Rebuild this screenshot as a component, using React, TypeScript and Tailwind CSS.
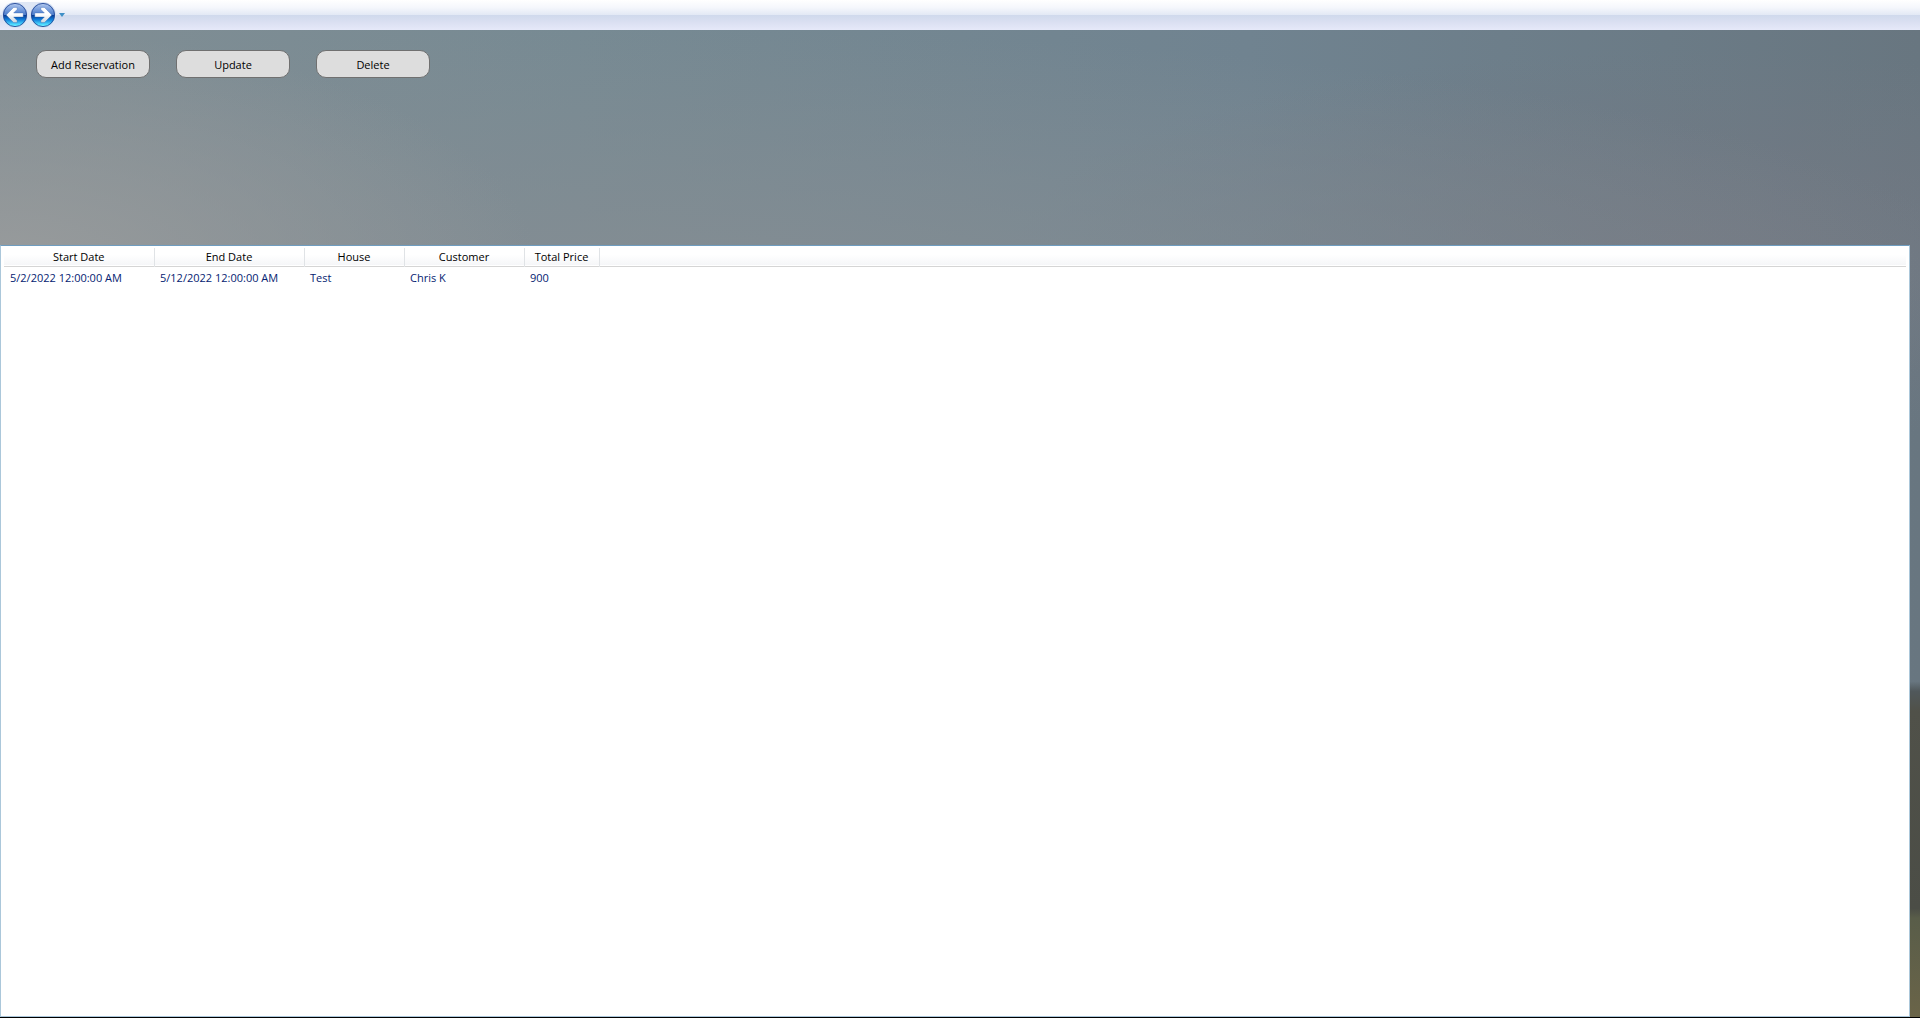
import React, { useState } from 'react';

interface Reservation {
  startDate: string;
  endDate: string;
  house: string;
  customer: string;
  totalPrice: number;
}

const RESERVATIONS: Reservation[] = [
  {
    startDate: '5/2/2022 12:00:00 AM',
    endDate: '5/12/2022 12:00:00 AM',
    house: 'Test',
    customer: 'Chris K',
    totalPrice: 900,
  },
];

const COLUMNS = [
  { label: 'Start Date', width: 'w-[150px]' },
  { label: 'End Date', width: 'w-[150px]' },
  { label: 'House', width: 'w-[100px]' },
  { label: 'Customer', width: 'w-[120px]' },
  { label: 'Total Price', width: 'w-[75px]' },
];

const ACTIONS = ['Add Reservation', 'Update', 'Delete'];

const ArrowIcon: React.FC<{ direction: 'back' | 'forward' }> = ({ direction }) => (
  <svg viewBox="0 0 26 26" className="block size-[26px]" aria-hidden="true">
    <defs>
      <linearGradient id={`${direction}-top`} x1="0" y1="0" x2="0" y2="1">
        <stop offset="0" stopColor="#b4caee" />
        <stop offset="0.5" stopColor="#7ba0de" />
        <stop offset="1" stopColor="#4a7bca" />
      </linearGradient>
      <linearGradient id={`${direction}-bottom`} x1="0" y1="0" x2="0" y2="1">
        <stop offset="0" stopColor="#07388f" />
        <stop offset="0.4" stopColor="#1080dc" />
        <stop offset="0.8" stopColor="#4fdcff" />
        <stop offset="1" stopColor="#7ff8ff" />
      </linearGradient>
      <linearGradient id={`${direction}-arrow`} x1="0" y1="0" x2="0" y2="1">
        <stop offset="0.45" stopColor="#ffffff" />
        <stop offset="1" stopColor="#ccd5dc" />
      </linearGradient>
    </defs>
    <circle cx="13" cy="13" r="12.8" fill="#d3dff2" />
    <path d="M1.2 13a11.8 11.8 0 0 1 23.6 0z" fill={`url(#${direction}-top)`} />
    <path d="M1.2 13a11.8 11.8 0 0 0 23.6 0z" fill={`url(#${direction}-bottom)`} />
    <circle cx="13" cy="13" r="11.6" fill="none" stroke="#254a98" strokeWidth="0.9" />
    <path
      d="M4.2 13l7.3-7.6h3.6v2L11.6 11h9.6v4h-9.6l3.5 3.6v2h-3.6z"
      transform={direction === 'forward' ? 'matrix(-1 0 0 1 26 0)' : undefined}
      fill={`url(#${direction}-arrow)`}
      stroke="#2558a8"
      strokeOpacity="0.5"
      strokeWidth="0.6"
    />
  </svg>
);

const NavigationBar: React.FC = () => (
  <nav className="h-[30px] shrink-0 flex items-center pl-0.5 bg-[linear-gradient(to_bottom,#ffffff_0%,#f5f7fc_25%,#e3e9f5_49%,#cfd9ec_50%,#dbe0f2_75%,#e6e9f9_100%)]">
    <div className="flex gap-0.5 rounded-full bg-[#dfe7f5]">
      <button aria-label="Back" className="rounded-full">
        <ArrowIcon direction="back" />
      </button>
      <button aria-label="Forward" className="rounded-full">
        <ArrowIcon direction="forward" />
      </button>
    </div>
    <button aria-label="Recent pages" className="w-3 h-5 flex items-center justify-center">
      <svg viewBox="0 0 6 4" className="w-1.5 h-1" aria-hidden="true">
        <path d="M0 0h6L3 4z" fill="#3f8fc6" />
      </svg>
    </button>
  </nav>
);

const ReservationTable: React.FC = () => {
  const [selected, setSelected] = useState<number | null>(null);

  return (
    <div className="flex-1 mr-[10px] pt-0.5 px-[3px] bg-white border border-[#abc7da] border-t-[#6f9dc0]">
      <table className="w-full table-fixed border-collapse">
        <thead>
          <tr className="h-[18px] bg-linear-to-b from-white from-40% to-[#f5f6f8] border-b border-[#d5d5d5]">
            {COLUMNS.map(col => (
              <th
                key={col.label}
                className={`${col.width} p-0 font-normal text-center text-black border-r border-[#e0e3e6]`}
              >
                {col.label}
              </th>
            ))}
            <th className="p-0" />
          </tr>
        </thead>
        <tbody className="text-[#042271]">
          {RESERVATIONS.map((r, i) => (
            <tr
              key={i}
              onClick={() => setSelected(i)}
              className={`h-6 ${selected === i ? 'bg-sky-100' : ''}`}
            >
              <td className="p-0 pl-1.5">{r.startDate}</td>
              <td className="p-0 pl-1.5">{r.endDate}</td>
              <td className="p-0 pl-1.5">{r.house}</td>
              <td className="p-0 pl-1.5">{r.customer}</td>
              <td className="p-0 pl-1.5">{r.totalPrice}</td>
              <td className="p-0" />
            </tr>
          ))}
        </tbody>
      </table>
    </div>
  );
};

export default function App() {
  return (
    <div className="min-h-screen flex flex-col font-['Open_Sans',sans-serif] text-[11px] leading-4 border-b border-black">
      <NavigationBar />
      {/* Sky at dusk, with the hills and the field at the bottom */}
      <main className="flex-1 flex flex-col bg-[radial-gradient(ellipse_28%_24%_at_0%_24%,#989b9c_0%,#989b9c00_100%),radial-gradient(ellipse_70%_26%_at_34%_26%,#848d93_0%,#848d9300_100%),radial-gradient(ellipse_35%_20%_at_88%_22%,#737983_0%,#73798300_100%),linear-gradient(to_bottom,#50585b00_0%,#50585b00_66%,#50585b_67%,#505149_69%,#4b4d46_89%,#595d49_90%,#6a6448_100%),linear-gradient(to_right,#818e94_0%,#778a93_30%,#708390_65%,#687680_100%)]">
        <div className="h-[215px] shrink-0 flex items-start gap-[26px] pt-5 pl-9">
          {ACTIONS.map(label => (
            <button
              key={label}
              className="w-[114px] h-7 pt-0.5 rounded-[10px] border border-[#707070] bg-[#dddddd] text-black hover:bg-[#bee6fd]"
            >
              {label}
            </button>
          ))}
        </div>
        <ReservationTable />
      </main>
    </div>
  );
}
